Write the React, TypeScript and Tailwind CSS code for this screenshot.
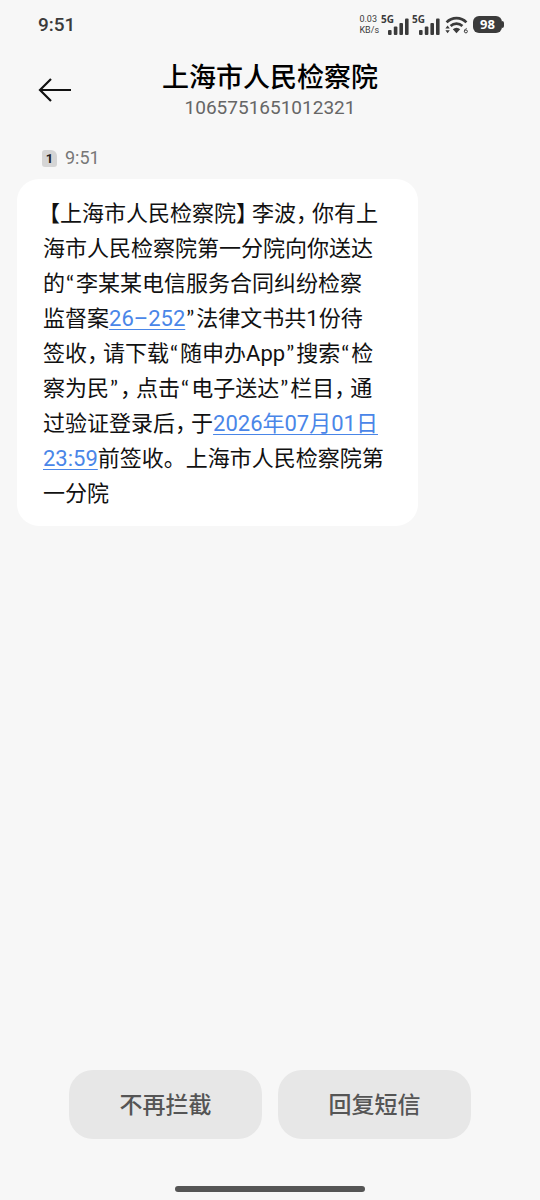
import type { ReactNode } from 'react';

function Signal() {
  return (
    <div className="flex h-5 items-end">
      <span className="-mr-[6px] self-start font-['Open_Sans'] text-[10px] leading-[9px] font-bold">5G</span>
      <svg width="21" height="18" viewBox="0 0 21 18" fill="currentColor" aria-hidden="true">
        <rect x="0" y="13" width="3.6" height="5" rx="1" />
        <rect x="5.8" y="9.5" width="3.6" height="8.5" rx="1" />
        <rect x="11.4" y="6" width="3.6" height="12" rx="1" />
        <rect x="17" y="1.5" width="3.6" height="16.5" rx="1" />
      </svg>
    </div>
  );
}

function Wifi() {
  return (
    <svg width="24" height="20" viewBox="0 0 24 20" fill="none" stroke="currentColor" aria-hidden="true">
      <path d="M1.6 7.4a13.7 13.7 0 0 1 19.8 0" strokeWidth="2.7" />
      <path d="M5.6 11a8.4 8.4 0 0 1 11.8 0" strokeWidth="2.6" />
      <path d="M11.5 18.3 7.8 14.2a5.2 5.2 0 0 1 7.4 0Z" fill="currentColor" stroke="none" />
      <path d="m2.6 10.6 2.2 3H.4ZM2.6 18.2l2.2-3H.4Z" fill="currentColor" stroke="none" />
      <path d="M21.6 13.4c-1.4.5-2.2 1.6-2.2 3" strokeWidth="1" />
      <circle cx="20.9" cy="16.4" r="1.5" strokeWidth="1" />
    </svg>
  );
}

function Battery() {
  return (
    <div className="flex items-center" aria-label="98%">
      <span className="flex h-[17px] w-[29px] items-center justify-center rounded-md bg-[#3b3b3b] font-['Open_Sans'] text-[13px] leading-none font-bold text-white">
        98
      </span>
      <span className="h-[7px] w-[2px] rounded-r-sm bg-[#3b3b3b]" />
    </div>
  );
}

function StatusBar() {
  return (
    <div className="flex h-[50px] items-center justify-between pr-[36px] pl-[38px] text-[#3b3b3b]">
      <time className="text-[19px] leading-6 font-medium">9:51</time>
      <div className="flex items-center pb-px">
        <div className="mr-[2px] text-[9px] leading-[11px]">
          <div>0.03</div>
          <div>KB/s</div>
        </div>
        <Signal />
        <div className="w-[3px]" />
        <Signal />
        <div className="w-[5px]" />
        <Wifi />
        <div className="w-[4px]" />
        <Battery />
      </div>
    </div>
  );
}

function Open({ children }: { children: ReactNode }) {
  return <span className="pl-[6px] [font-feature-settings:'halt']">{children}</span>;
}

function Close({ children }: { children: ReactNode }) {
  return <span className="pr-[5px] [font-feature-settings:'halt']">{children}</span>;
}

function Quote({ children }: { children: ReactNode }) {
  return <span className="pr-[2px] pl-px font-[Lato] leading-none">{children}</span>;
}

function Detected({ children }: { children: ReactNode }) {
  return (
    <a href="#" className="text-[#4a86e8] underline decoration-1 underline-offset-3">
      {children}
    </a>
  );
}

function Message() {
  return (
    <p className="mr-[122px] ml-[17px] rounded-[22px] bg-white pt-[17px] pb-[15px] pl-[26px] text-[22px] leading-[35px] whitespace-nowrap text-[#111]">
      <Open>【</Open>上海市人民检察院<Close>】</Close>李波<Close>，</Close>你有上<br />
      海市人民检察院第一分院向你送达<br />
      的<Quote>“</Quote>李某某电信服务合同纠纷检察<br />
      监督案<Detected>26–252</Detected><Quote>”</Quote>法律文书共1份待<br />
      签收<Close>，</Close>请下载<Quote>“</Quote>随申办App<Quote>”</Quote>搜索<Quote>“</Quote>检<br />
      察为民<Quote>”</Quote><Close>，</Close>点击<Quote>“</Quote>电子送达<Quote>”</Quote>栏目<Close>，</Close>通<br />
      过验证登录后<Close>，</Close>于<Detected>2026年07月01日<br />
      23:59</Detected>前签收。上海市人民检察院第<br />
      一分院
    </p>
  );
}

function ActionButton({ children }: { children: ReactNode }) {
  return (
    <button type="button" className="h-[69px] flex-1 rounded-[24px] bg-[#e7e7e7] pt-1 text-[23px] font-medium text-[#555]">
      {children}
    </button>
  );
}

export default function App() {
  return (
    <div lang="zh-CN" className="flex min-h-screen flex-col bg-[#f7f7f7] font-[Roboto,'Noto_Sans_CJK_SC',sans-serif]">
      <StatusBar />
      <header className="grid grid-cols-[80px_1fr_80px] items-center pt-[10px]">
        <button type="button" aria-label="返回" className="pl-[38px]">
          <svg width="34" height="24" viewBox="0 0 34 24" fill="none" stroke="#111" strokeWidth="2.2" aria-hidden="true">
            <path d="M33 12H2M13 1 2 12l11 11" />
          </svg>
        </button>
        <div className="text-center">
          <h1 className="text-[27px] leading-9 font-medium text-black">上海市人民检察院</h1>
          <p className="text-[19px] leading-6 text-[#666]">1065751651012321</p>
        </div>
      </header>
      <main className="flex-1">
        <div className="flex items-center gap-2 pt-[26px] pb-[9px] pl-[42px]">
          <span className="flex h-[17px] w-[15px] items-center justify-center rounded-[3px] rounded-tr-md bg-[#d5d5d5] text-[13px] leading-none font-bold text-[#222]">
            1
          </span>
          <time className="text-[18px] leading-6 text-[#777]">9:51</time>
        </div>
        <Message />
      </main>
      <footer className="px-[69px] pb-[8px]">
        <div className="flex gap-4">
          <ActionButton>不再拦截</ActionButton>
          <ActionButton>回复短信</ActionButton>
        </div>
        <div className="mx-auto mt-[47px] h-[6px] w-[190px] rounded-full bg-[#555]" />
      </footer>
    </div>
  );
}
